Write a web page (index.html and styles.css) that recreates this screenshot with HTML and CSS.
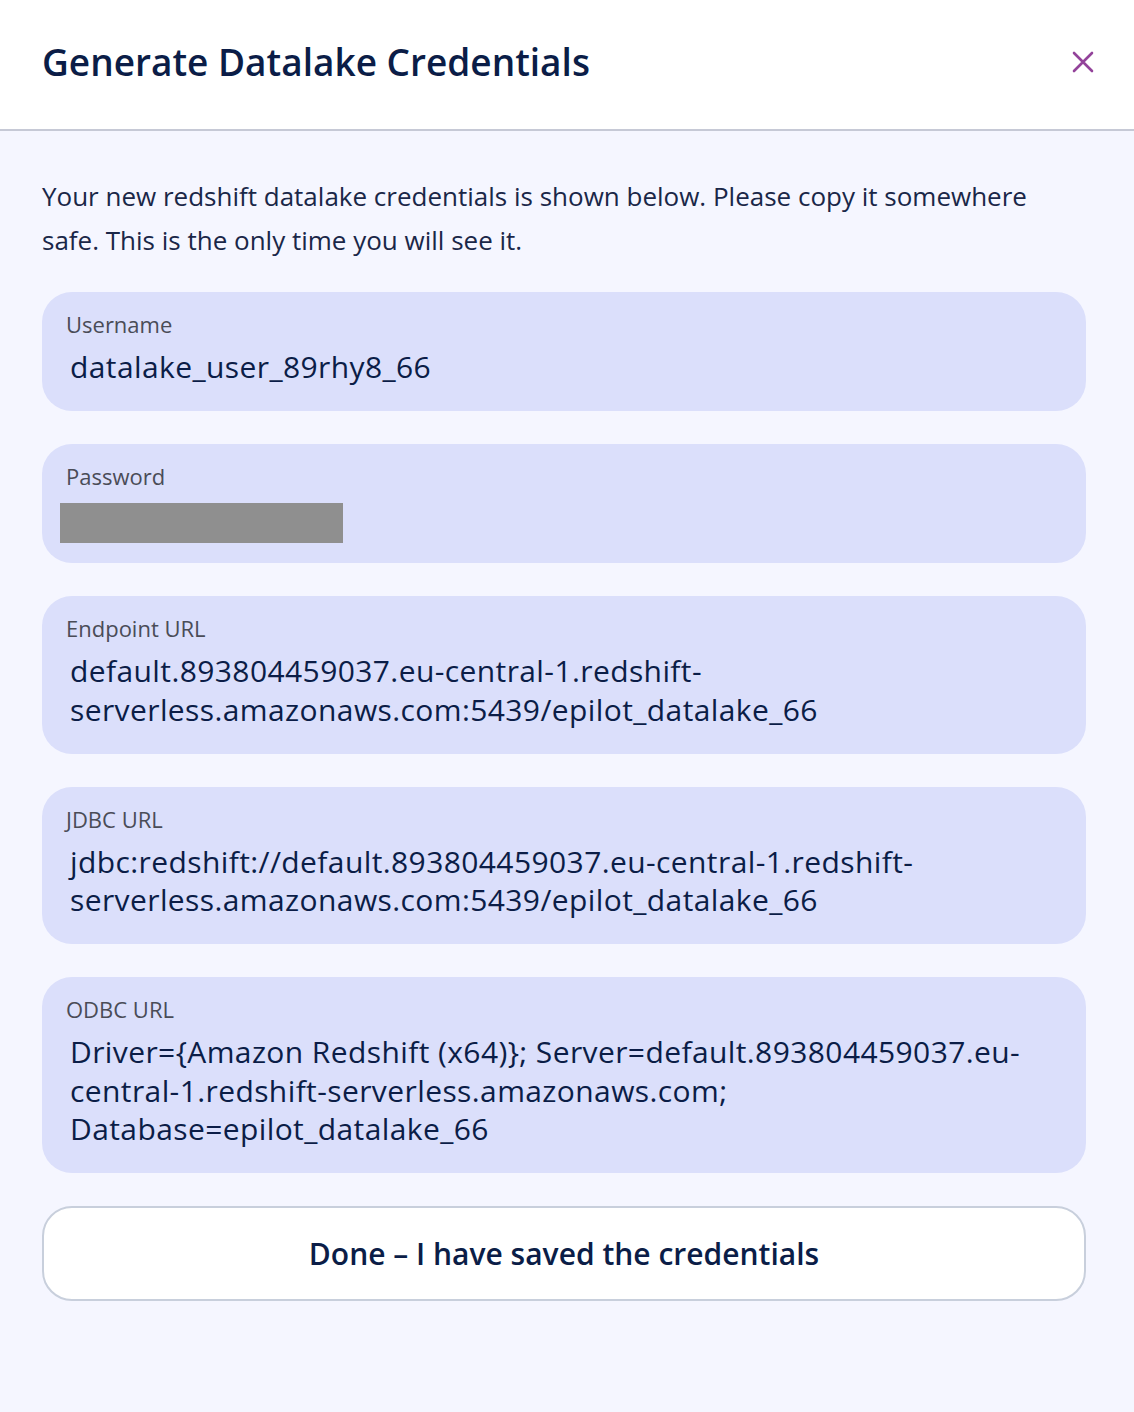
FILE: index.html
```html
<!DOCTYPE html>
<html lang="en">
<head>
<meta charset="utf-8">
<title>Generate Datalake Credentials</title>
<link rel="stylesheet" href="styles.css">
</head>
<body>
<div class="modal">
  <header class="modal-header">
    <h1 class="modal-title">Generate Datalake Credentials</h1>
    <button class="close-btn" aria-label="Close">
      <svg width="22" height="22" viewBox="0 0 22 22"><path d="M2 2 L20 20 M20 2 L2 20" stroke="#93439a" stroke-width="2.6" stroke-linecap="round" fill="none"/></svg>
    </button>
  </header>
  <main class="modal-body">
    <p class="intro">Your new redshift datalake credentials is shown below. Please copy it somewhere safe. This is the only time you will see it.</p>
    <div class="field">
      <div class="field-label">Username</div>
      <div class="field-value">datalake_user_89rhy8_66</div>
    </div>
    <div class="field field-password">
      <div class="field-label">Password</div>
      <div class="redacted"></div>
    </div>
    <div class="field">
      <div class="field-label">Endpoint URL</div>
      <div class="field-value">default.893804459037.eu-central-1.redshift-serverless.amazonaws.com:5439/epilot_datalake_66</div>
    </div>
    <div class="field">
      <div class="field-label">JDBC URL</div>
      <div class="field-value">jdbc:redshift://default.893804459037.eu-central-1.redshift-serverless.amazonaws.com:5439/epilot_datalake_66</div>
    </div>
    <div class="field">
      <div class="field-label">ODBC URL</div>
      <div class="field-value">Driver={Amazon Redshift (x64)}; Server=default.893804459037.eu-central-1.redshift-serverless.amazonaws.com; Database=epilot_datalake_66</div>
    </div>
    <button class="done-btn">Done – I have saved the credentials</button>
  </main>
</div>
</body>
</html>
```
FILE: styles.css
```css
* { box-sizing: border-box; }
html, body { margin: 0; padding: 0; }
body {
  font-family: "Open Sans", Lato, sans-serif;
  background: #f5f6ff;
  color: #0b1d47;
}
.modal { width: 1134px; min-height: 1412px; background: #f5f6ff; }
.modal-header {
  height: 131px;
  background: #ffffff;
  border-bottom: 2px solid #c6c9d6;
  display: flex;
  align-items: center;
  justify-content: space-between;
  padding: 0 40px 6px 42px;
}
.modal-title {
  margin: 0;
  font-size: 37px;
  font-weight: 600;
  color: #0b1d47;
}
.close-btn {
  background: none;
  border: 0;
  padding: 0;
  width: 22px;
  height: 22px;
  display: flex;
  cursor: pointer;
}
.modal-body {
  padding: 43px 48px 40px 42px;
  display: flex;
  flex-direction: column;
  gap: 33px;
}
.intro {
  margin: 0 0 -3px;
  font-size: 26px;
  line-height: 44px;
  color: #1a2748;
  padding-right: 0;
}
.field {
  background: #dbdffb;
  border-radius: 30px;
  padding: 16px 24px 24.5px;
  display: flex;
  flex-direction: column;
  gap: 8px;
}
.field-label {
  font-size: 22px;
  line-height: 32px;
  color: #4a4c57;
}
.field-value {
  font-size: 30px;
  line-height: 38.5px;
  letter-spacing: 0.4px;
  color: #0b1d47;
  padding-left: 4px;
  overflow-wrap: anywhere;
}
.field-password { padding-bottom: 20px; gap: 11px; }
.redacted {
  width: 283px;
  height: 40px;
  background: #8f8f8f;
  margin-left: -6px;
}
.done-btn {
  margin-top: 0;
  height: 95px;
  background: #ffffff;
  border: 2px solid #c8cfdc;
  border-radius: 30px;
  font-family: inherit;
  font-size: 30px;
  font-weight: 600;
  color: #0b1d47;
  cursor: pointer;
}
```
